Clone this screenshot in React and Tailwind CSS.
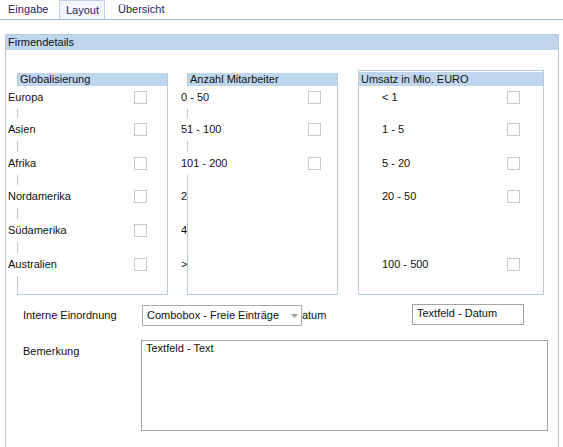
import React from "react";

const g1 = ["Europa", "Asien", "Afrika", "Nordamerika", "Südamerika", "Australien"];
const g2 = ["0 - 50", "51 - 100", "101 - 200", "2", "4", ">"];
const g3 = ["< 1", "1 - 5", "5 - 20", "20 - 50", null, "100 - 500"];
const gaps = ["mt-0", "mt-[9px]", "mt-[11px]", "mt-[10px]", "mt-[11px]", "mt-[11px]"];

function Box() {
  return <div className="w-[13px] h-[13px] border border-[#cacaca] bg-white shrink-0" />;
}

export default function App() {
  return (
    <div className="w-[563px] h-[447px] overflow-hidden bg-white text-[11px] text-[#111] font-['Liberation_Sans',Arial,sans-serif]">
      <div className="flex h-[20px] border-b border-[#9fb9dc]">
        <div className="w-[59px] pl-[8px] leading-[19px] text-[#24245e]">Eingabe</div>
        <div className="w-[46px] pl-[6px] leading-[18px] bg-[#f3f7fc] border-x border-t border-[#c3d3e6] text-[#24245e]">Layout</div>
        <div className="pl-[13px] leading-[19px] text-[#24245e]">Übersicht</div>
      </div>
      <div className="ml-[5px] mt-[14px] w-[554px] h-[413px] border-x border-t border-[#b7c9db]">
        <div className="h-[15px] bg-[#bfd7ee] pl-[2px] leading-[15px]">Firmendetails</div>
        <div className="flex items-start pt-[20px]">
          <div className="ml-[11px] mt-[3px] w-[151px] h-[222px] border-x border-b border-[#b7c9db] flex flex-col">
            <div className="h-[13px] bg-[#bfd7ee] leading-[13px] pl-[2px]">Globalisierung</div>
            {g1.map((t, i) => (
              <div key={t} className={"relative -ml-[11px] w-[140px] h-[23px] bg-white flex items-center justify-between pl-[1px] " + gaps[i]}>
                <span>{t}</span>
                <Box />
              </div>
            ))}
          </div>
          <div className="ml-[19px] mt-[3px] w-[151px] h-[222px] border-x border-b border-[#b7c9db] flex flex-col">
            <div className="h-[13px] bg-[#bfd7ee] leading-[13px] pl-[2px]">Anzahl Mitarbeiter</div>
            {g2.map((t, i) =>
              i < 3 ? (
                <div key={t} className={"relative -ml-[7px] w-[140px] h-[23px] bg-white flex items-center justify-between " + gaps[i]}>
                  <span>{t}</span>
                  <Box />
                </div>
              ) : (
                <div key={t} className={"-ml-[7px] w-[6px] h-[23px] whitespace-nowrap leading-[23px] " + gaps[i]}>
                  {t}
                </div>
              )
            )}
          </div>
          <div className="ml-[20px] w-[186px] h-[225px] border border-[#b7c9db] flex flex-col">
            <div className="mt-px h-[14px] bg-[#bfd7ee] leading-[14px] pl-[2px]">Umsatz in Mio. EURO</div>
            {g3.map((t, i) =>
              t ? (
                <div key={t} className={"ml-[23px] w-[138px] h-[23px] flex items-center justify-between " + gaps[i]}>
                  <span>{t}</span>
                  <Box />
                </div>
              ) : (
                <div key={"e" + i} className={"h-[23px] " + gaps[i]} />
              )
            )}
          </div>
        </div>
        <div className="flex items-start mt-[9px]">
          <div className="pl-[17px] w-[136px] mt-px leading-[21px]">Interne Einordnung</div>
          <div className="relative z-10 mt-px w-[160px] h-[21px] border border-[#adadad] bg-white flex items-center justify-between pl-[4px] pr-[3px]">
            <span>Combobox - Freie Einträge</span>
            <svg width="7" height="4" viewBox="0 0 7 4">
              <path d="M0 0h7L3.5 4z" fill="#9d9d9d" />
            </svg>
          </div>
          <div className="-ml-[8px] w-[118px] mt-px leading-[21px]">Datum</div>
          <div className="w-[112px] h-[21px] border border-[#a3a3a3] pl-[4px] leading-[17px]">Textfeld - Datum</div>
        </div>
        <div className="flex items-start mt-[14px]">
          <div className="pl-[17px] w-[135px] mt-px leading-[21px]">Bemerkung</div>
          <div className="w-[407px] h-[91px] border border-[#a3a3a3] pl-[4px] leading-[14px]">Textfeld - Text</div>
        </div>
      </div>
    </div>
  );
}
